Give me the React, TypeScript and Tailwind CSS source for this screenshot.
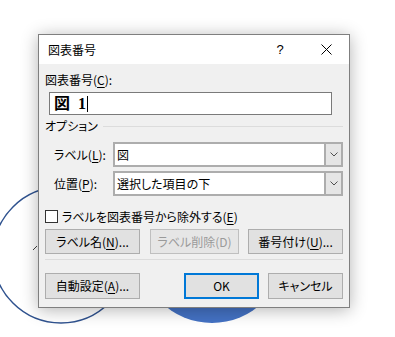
import React from "react";

const U = ({ c }: { c: string }) => <span className="underline underline-offset-[2px]">{c}</span>;

function Btn({ children, w, h = 25, disabled = false, primary = false }: { children: React.ReactNode; w: number; h?: number; disabled?: boolean; primary?: boolean }) {
  return (
    <div
      className={
        "flex items-center justify-center " +
        (primary
          ? "border-2 border-[#0078d7] bg-[#e1e1e1] text-[#000]"
          : disabled
          ? "border border-[#bfbfbf] bg-[#e6e6e6] text-[#9a9a9a]"
          : "border border-[#adadad] bg-[#e1e1e1] text-[#000]")
      }
      style={{ width: w, height: h }}
    >
      {children}
    </div>
  );
}

function Combo({ text }: { text: string }) {
  return (
    <div className="flex h-[25px] w-[230px] border-2 border-[#adadad] bg-white">
      <div className="flex flex-1 items-center pl-[2px]">{text}</div>
      <div className="flex w-[17px] items-center justify-center border-l-2 border-[#adadad] bg-[#e5e5e5]">
        <svg width="8" height="5" viewBox="0 0 8 5">
          <path d="M0.5 0.5 L4 4 L7.5 0.5" fill="none" stroke="#505050" strokeWidth="1" />
        </svg>
      </div>
    </div>
  );
}

export default function App() {
  return (
    <div
      className="relative h-[337px] w-[395px] overflow-hidden bg-white text-[12px] leading-[16px] text-black [font-feature-settings:'palt']"
      style={{ fontFamily: '"Noto Sans CJK JP", "Noto Sans", sans-serif' }}
    >
      <svg className="absolute left-0 top-0" width="395" height="337">
        <circle cx="61" cy="255" r="68" fill="none" stroke="#2f528f" strokeWidth="1.5" />
        <circle cx="212" cy="250" r="73" fill="#4472c4" />
        <line x1="33" y1="250" x2="37" y2="246" stroke="#404040" strokeWidth="1" />
      </svg>

      <div className="absolute left-[38px] top-[34px] flex h-[274px] w-[312px] flex-col border border-[#7f7f7f] bg-[#f0f0f0] shadow-[0_2px_16px_rgba(0,0,0,0.3)]">
        <div className="flex h-[29px] items-center bg-white pl-[9px]">
          <span>図表番号</span>
          <div className="ml-auto flex h-full w-[46px] items-center justify-center text-[13px]" style={{ fontFamily: '"Liberation Sans", sans-serif' }}>?</div>
          <div className="flex h-full w-[46px] items-center justify-center">
            <svg width="11" height="11" viewBox="0 0 11 11">
              <path d="M0.5 0.5 L10.5 10.5 M10.5 0.5 L0.5 10.5" stroke="#000" strokeWidth="1" />
            </svg>
          </div>
        </div>

        <div className="flex flex-col px-[6px] pt-[8px]">
          <div className="h-[16px]">
            図表番号(<U c="C" />):
          </div>
          <div className="ml-[4px] mt-[4px] flex h-[23px] w-[283px] items-center border border-[#7a7a7a] bg-white pl-[4px]">
            <span className="text-[16px] font-bold leading-[18px] [font-feature-settings:normal]" style={{ fontFamily: '"Liberation Serif", "Noto Sans CJK JP", serif' }}>
              図 &nbsp;1
            </span>
            <span className="ml-[1px] h-[16px] w-[1px] bg-black" />
          </div>

          <div className="mt-[3px] flex h-[16px] items-center">
            <span>オプション</span>
            <div className="ml-[5px] h-px flex-1 bg-[#dcdcdc]" />
          </div>

          <div className="mt-[8px] flex items-center">
            <span className="w-[68px] pl-[9px]">
              ラベル(<U c="L" />):
            </span>
            <Combo text="図" />
          </div>
          <div className="mt-[4px] flex items-center">
            <span className="w-[68px] pl-[9px]">
              位置(<U c="P" />):
            </span>
            <Combo text="選択した項目の下" />
          </div>

          <div className="mt-[14px] flex h-[13px] items-center">
            <div className="h-[13px] w-[13px] border border-[#333] bg-white" />
            <span className="ml-[4px]">
              ラベルを図表番号から除外する(<U c="E" />)
            </span>
          </div>

          <div className="mt-[6px] flex">
            <Btn w={95}>
              ラベル名(<U c="N" />)...
            </Btn>
            <div className="ml-[10px]">
              <Btn w={89} disabled>
                ラベル削除(D)
              </Btn>
            </div>
            <div className="ml-[9px]">
              <Btn w={95}>
                番号付け(<U c="U" />)...
              </Btn>
            </div>
          </div>

          <div className="mt-[5px] h-px bg-[#dcdcdc]" />

          <div className="mt-[13px] flex">
            <Btn w={95} h={26}>
              自動設定(<U c="A" />)...
            </Btn>
            <div className="ml-[44px]">
              <Btn w={75} h={26} primary>
                OK
              </Btn>
            </div>
            <div className="ml-[9px]">
              <Btn w={75} h={26}>
                キャンセル
              </Btn>
            </div>
          </div>
        </div>
      </div>
    </div>
  );
}
